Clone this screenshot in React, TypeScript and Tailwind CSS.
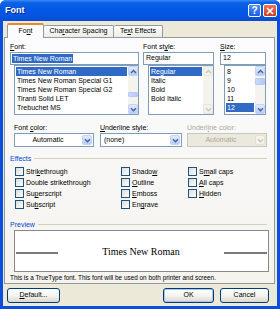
import React from "react";

const ui = "font-['Liberation_Sans','DejaVu_Sans',sans-serif]";

function K({ children }: { children: React.ReactNode }) {
  return <span className="underline decoration-[0.5px] underline-offset-[1px]">{children}</span>;
}

function Chevron({ dir, color }: { dir: "up" | "down"; color: string }) {
  return (
    <svg width="7" height="5" viewBox="0 0 7 5">
      <polyline
        points={dir === "up" ? "1,4 3.5,1.5 6,4" : "1,1.2 3.5,3.7 6,1.2"}
        fill="none"
        stroke={color}
        strokeWidth="1.4"
      />
    </svg>
  );
}

function SBtn({ dir, disabled }: { dir: "up" | "down"; disabled?: boolean }) {
  return (
    <div
      className={`h-[10px] flex items-center justify-center rounded-[2px] border ${
        disabled
          ? "bg-[#f2f1ea] border-[#e9e7dd]"
          : "bg-gradient-to-b from-[#e1eafe] to-[#b6cbfb] border-[#c3d2f6]"
      }`}
    >
      <Chevron dir={dir} color={disabled ? "#cbc9bc" : "#4d6185"} />
    </div>
  );
}

function ScrollBar({ thumb, disabled }: { thumb?: string; disabled?: boolean }) {
  return (
    <div className="w-[10px] flex flex-col bg-[#f4f3ee]">
      <SBtn dir="up" disabled={disabled} />
      <div className="flex-1 flex flex-col">
        {thumb && (
          <div
            className={`${thumb} rounded-[1px] border border-[#b8cbf6] bg-gradient-to-r from-[#c9d8fc] to-[#b4c9f7]`}
          />
        )}
      </div>
      <SBtn dir="down" disabled={disabled} />
    </div>
  );
}

function ListBox({
  items,
  selected,
  thumb,
  disabled,
  indent,
}: {
  items: string[];
  selected: number;
  thumb?: string;
  disabled?: boolean;
  indent: string;
}) {
  return (
    <div className={`${indent} h-[50px] flex border border-[#7f9db9] bg-white`}>
      <div className="flex-1 flex flex-col pt-[1px] pl-[1px] pr-[1px]">
        {items.map((it, i) => (
          <div
            key={it}
            className={`h-[9px] leading-[9px] pl-[1px] whitespace-nowrap ${
              i === selected ? "bg-[#316ac5] text-white" : "text-black"
            }`}
          >
            {it}
          </div>
        ))}
      </div>
      <ScrollBar thumb={thumb} disabled={disabled} />
    </div>
  );
}

function Combo({
  value,
  center,
  disabled,
}: {
  value: string;
  center?: boolean;
  disabled?: boolean;
}) {
  return (
    <div
      className={`h-[14px] flex border ${
        disabled ? "border-[#c9c7ba] bg-[#ebe9dd]" : "border-[#7f9db9] bg-white"
      }`}
    >
      <div
        className={`flex-1 flex items-center ${center ? "justify-center" : "pl-[3px]"} ${
          disabled ? "text-[#aca899]" : "text-black"
        }`}
      >
        {value}
      </div>
      <div
        className={`w-[10px] m-[1px] rounded-[2px] border flex items-center justify-center ${
          disabled
            ? "bg-[#f2f1ea] border-[#e3e1d6]"
            : "bg-gradient-to-b from-[#e1eafe] to-[#b6cbfb] border-[#c3d2f6]"
        }`}
      >
        <Chevron dir="down" color={disabled ? "#cbc9bc" : "#4d6185"} />
      </div>
    </div>
  );
}

function Check({ children }: { children: React.ReactNode }) {
  return (
    <div className="h-[11px] flex items-center gap-[2px]">
      <div className="w-[9px] h-[9px] border border-[#1c5180] bg-gradient-to-br from-[#dcdcd7] to-white" />
      <span className="leading-none">{children}</span>
    </div>
  );
}

function GroupHead({ label }: { label: string }) {
  return (
    <div className="h-[10px] flex items-center pl-[5px] pr-[7px] gap-[3px]">
      <span className="text-[#0046d5] leading-none">{label}</span>
      <div className="flex-1 h-px bg-[#d0d0bf]" />
    </div>
  );
}

function XpButton({ children, w, def }: { children: React.ReactNode; w: string; def?: boolean }) {
  return (
    <div
      className={`${w} h-[15px] rounded-[3px] border border-[#003c74] bg-gradient-to-b from-white via-[#f4f4f0] to-[#dcd8cd] flex items-center justify-center text-black ${
        def ? "shadow-[inset_0_0_0_1px_#a8c4f4]" : ""
      }`}
    >
      <span>{children}</span>
    </div>
  );
}

export default function App() {
  return (
    <div className={`${ui} w-[280px] h-[309px] flex flex-col rounded-t-[6px] overflow-hidden bg-[#0a4fdd] text-[7px] text-black`}>
      {/* title bar */}
      <div className="h-[21px] flex items-center pl-[5px] pr-[3px] bg-[linear-gradient(to_bottom,#3c8cf6_0%,#0f63e6_12%,#0558e4_40%,#0454e0_80%,#0a4ad0_100%)]">
        <span className="text-white font-bold text-[9px] [text-shadow:1px_1px_0_#0a2a8a]">Font</span>
        <div className="flex-1" />
        <div className="w-[13px] h-[13px] rounded-[2px] border border-white bg-gradient-to-b from-[#4d8df7] to-[#1f5fe0] flex items-center justify-center text-white font-bold text-[10px] leading-none">
          ?
        </div>
        <div className="w-[14px] h-[13px] ml-[2px] rounded-[2px] border border-white bg-gradient-to-b from-[#e8785a] to-[#c8401c] flex items-center justify-center">
          <svg width="8" height="8" viewBox="0 0 8 8">
            <path d="M1 1 L7 7 M7 1 L1 7" stroke="white" strokeWidth="1.6" />
          </svg>
        </div>
      </div>

      {/* body */}
      <div className="h-[285px] mx-[3px] bg-[#ece9d8] flex flex-col">
        {/* tabs */}
        <div className="h-[16px] flex items-end pl-[4px]">
          <div className="relative h-[15px] w-[37px] -mb-px z-10 bg-[#fcfcfe] border border-b-0 border-[#919b9c] rounded-t-[2px] border-t-2 border-t-[#e68b2c] flex items-center justify-center">
            <span>Fo<K>n</K>t</span>
          </div>
          <div className="h-[12px] w-[70px] bg-gradient-to-b from-white to-[#ecebe5] border border-l-0 border-b-0 border-[#919b9c] rounded-t-[2px] flex items-center justify-center">
            <span>Cha<K>r</K>acter Spacing</span>
          </div>
          <div className="h-[12px] w-[49px] bg-gradient-to-b from-white to-[#ecebe5] border border-l-0 border-b-0 border-[#919b9c] rounded-t-[2px] flex items-center justify-center">
            <span>Te<K>x</K>t Effects</span>
          </div>
        </div>

        {/* panel */}
        <div className="h-[247px] ml-[1px] mr-[2px] border border-[#919b9c] bg-gradient-to-b from-[#fcfcfe] to-[#f4f3ee] flex flex-col pt-[3px]">
          {/* font / style / size */}
          <div className="grid grid-cols-[129px_71px_48px] gap-x-[4px] pl-[5px]">
            <div className="flex flex-col">
              <div className="h-[11px] leading-[11px]"><K>F</K>ont:</div>
              <div className="h-[13px] border border-[#7f9db9] bg-white flex items-center pl-[1px]">
                <span className="bg-[#316ac5] text-white px-[1px] leading-[9px]">Times New Roman</span>
              </div>
              <ListBox
                indent="ml-[4px]"
                items={["Times New Roman", "Times New Roman Special G1", "Times New Roman Special G2", "Tiranti Solid LET", "Trebuchet MS"]}
                selected={0}
                thumb="mt-[16px] h-[5px]"
              />
            </div>
            <div className="flex flex-col">
              <div className="h-[11px] leading-[11px]">Font st<K>y</K>le:</div>
              <div className="h-[13px] border border-[#7f9db9] bg-white flex items-center pl-[2px]">Regular</div>
              <ListBox indent="ml-[5px]" items={["Regular", "Italic", "Bold", "Bold Italic"]} selected={0} disabled />
            </div>
            <div className="flex flex-col ml-[2px]">
              <div className="h-[11px] leading-[11px]"><K>S</K>ize:</div>
              <div className="h-[13px] border border-[#7f9db9] bg-white flex items-center pl-[2px]">12</div>
              <ListBox indent="ml-[4px]" items={["8", "9", "10", "11", "12"]} selected={4} thumb="mt-[2px] h-[7px]" />
            </div>
          </div>

          {/* colour / underline */}
          <div className="grid grid-cols-[80px_83px_80px] gap-x-[5px] pl-[9px] mt-[8px]">
            <div className="flex flex-col">
              <div className="h-[10px] leading-[10px]">Font <K>c</K>olor:</div>
              <Combo value="Automatic" center />
            </div>
            <div className="flex flex-col ml-[1px]">
              <div className="h-[10px] leading-[10px]"><K>U</K>nderline style:</div>
              <Combo value="(none)" />
            </div>
            <div className="flex flex-col">
              <div className="h-[10px] leading-[10px] text-[#aca899]">Underl<K>i</K>ne color:</div>
              <Combo value="Automatic" center disabled />
            </div>
          </div>

          {/* effects */}
          <div className="mt-[6px]">
            <GroupHead label="Effects" />
          </div>
          <div className="grid grid-cols-[106px_67px_1fr] pl-[10px] mt-[3px]">
            <div className="flex flex-col">
              <Check>Stri<K>k</K>ethrough</Check>
              <Check>Double strikethrough</Check>
              <Check>Su<K>p</K>erscript</Check>
              <Check>Su<K>b</K>script</Check>
            </div>
            <div className="flex flex-col">
              <Check>Shado<K>w</K></Check>
              <Check><K>O</K>utline</Check>
              <Check><K>E</K>mboss</Check>
              <Check>En<K>g</K>rave</Check>
            </div>
            <div className="flex flex-col">
              <Check>S<K>m</K>all caps</Check>
              <Check><K>A</K>ll caps</Check>
              <Check><K>H</K>idden</Check>
            </div>
          </div>

          {/* preview */}
          <div className="mt-[9px]">
            <GroupHead label="Preview" />
          </div>
          <div className="ml-[9px] mt-px w-[255px] h-[42px] border border-[#8a8a86] bg-white flex items-center px-[1px]">
            <div className="w-[42px] h-[2px] bg-[#7a7a7a] mt-[4px]" />
            <div className="flex-1 flex justify-center">
              <span className="font-['Liberation_Serif','Times_New_Roman',serif] text-[10px] text-black">Times New Roman</span>
            </div>
            <div className="w-[43px] h-[2px] bg-[#7a7a7a] mt-[4px]" />
          </div>
          <div className="mt-[2px] pl-[5px] h-[8px] leading-[8px] text-[6.4px] whitespace-nowrap">
            This is a TrueType font. This font will be used on both printer and screen.
          </div>
        </div>

        {/* buttons */}
        <div className="flex items-center mt-[4px] pl-[4px] pr-[8px]">
          <XpButton w="w-[53px]"><K>D</K>efault...</XpButton>
          <div className="flex-1" />
          <XpButton w="w-[51px]" def>OK</XpButton>
          <div className="w-[6px]" />
          <XpButton w="w-[49px]">Cancel</XpButton>
        </div>
      </div>
    </div>
  );
}
